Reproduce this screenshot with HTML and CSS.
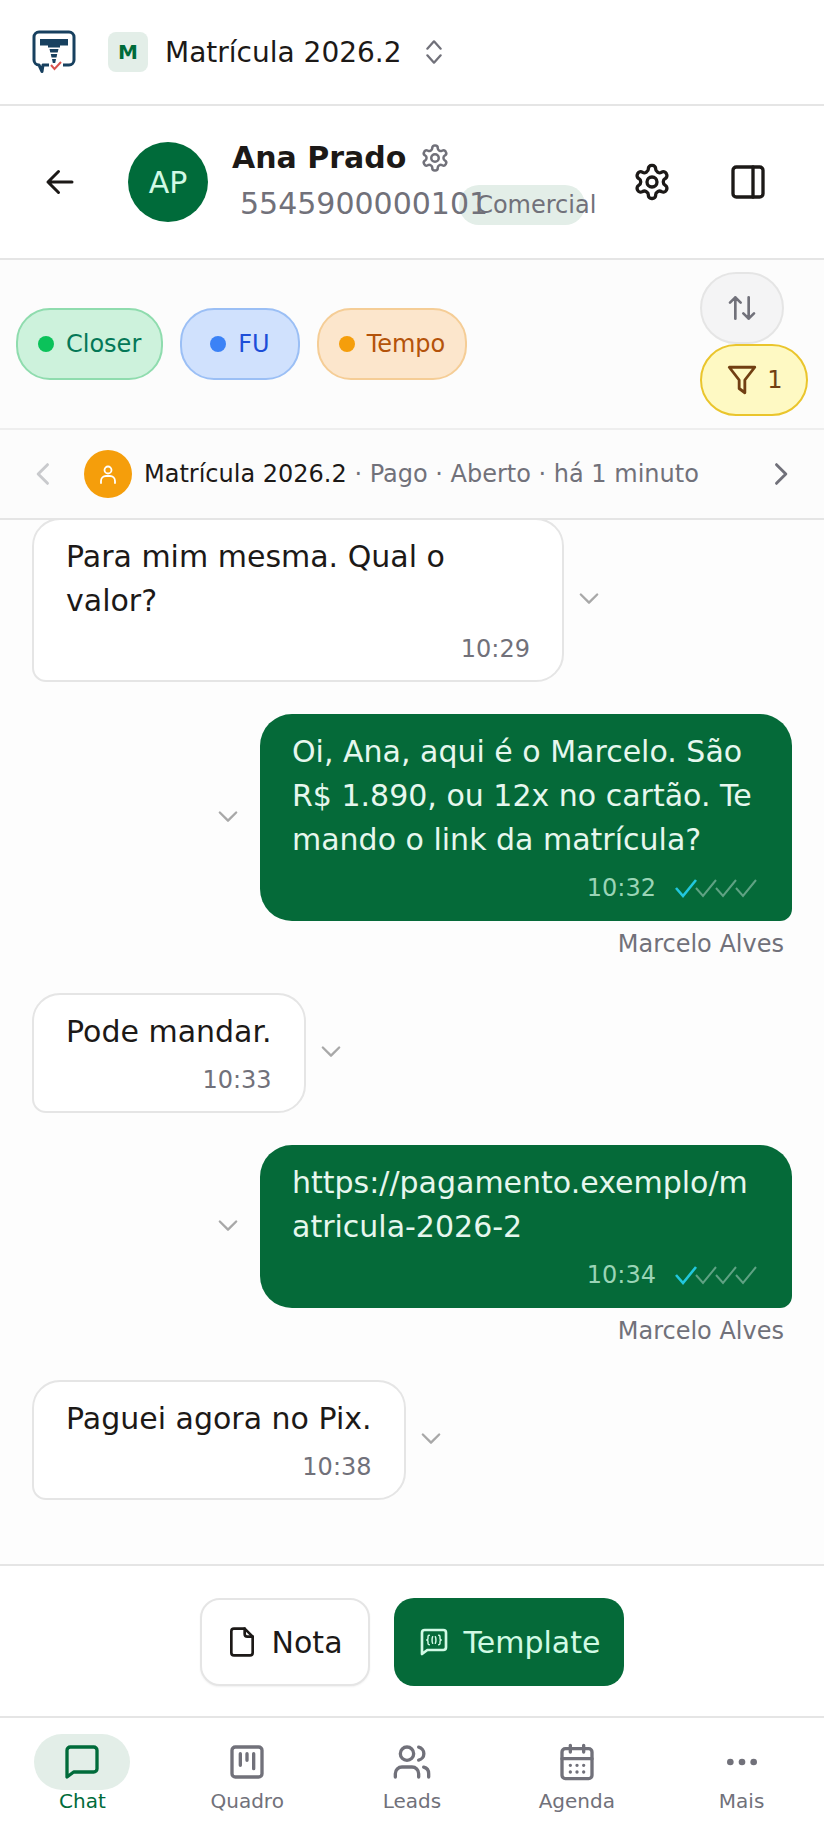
FILE: index.html

```html
<!DOCTYPE html>
<html lang="pt-BR">
<head>
  <meta charset="UTF-8">
  <meta name="viewport" content="width=device-width, initial-scale=1.0">
  <title>Chat</title>
  <link rel="stylesheet" href="styles.css">
</head>
<body>
  <div class="app">
    <div class="topbar">
      <svg class="logo" viewBox="0 0 44 44" fill="none">
        <path d="M17 35H11l-1 6.500-3-6.500a5 5 0 0 1-5-5V7a5 5 0 0 1 5-5h30a5 5 0 0 1 5 5v23a5 5 0 0 1-5 5h-6" stroke="#17405f" stroke-width="3" stroke-linejoin="round"/>
        <path d="M8 9h28v6.500H28v2H16v-2H8zM17.500 19h9l-.8 3.500h-7.400zM18.800 24h6.400l-.7 3.500h-5zM20 29h4l-.8 4h-2.400z" fill="#17405f"/>
        <path d="M19 35l3.500 4 6.500-7" stroke="#d9534f" stroke-width="2"/>
      </svg>
      <div class="workspace-badge">M</div>
      <span class="workspace-name">Matrícula 2026.2</span>
      <svg class="updown" viewBox="0 0 24 24" fill="none" stroke="#71717a" stroke-width="1.700" stroke-linecap="round" stroke-linejoin="round"><path d="M7 9.500 12 4l5 5.500M7 14.500 12 20l5-5.500"/></svg>
    </div>

    <div class="contact">
      <svg class="icon back" viewBox="0 0 24 24" fill="none" stroke="#1c1917" stroke-width="2" stroke-linecap="round" stroke-linejoin="round"><path d="M20 12H4M11 5l-7 7 7 7"/></svg>
      <div class="avatar">AP</div>
      <div class="contact-info">
        <div class="contact-name">Ana Prado
          <svg class="gear-small" viewBox="0 0 24 24" fill="none" stroke="#71717a" stroke-width="2" stroke-linecap="round" stroke-linejoin="round"><path d="M12.200 2h-.4a2 2 0 0 0-2 2v.2a2 2 0 0 1-1 1.700l-.4.3a2 2 0 0 1-2 0l-.2-.1a2 2 0 0 0-2.700.7l-.2.4a2 2 0 0 0 .7 2.700l.2.100a2 2 0 0 1 1 1.700v.5a2 2 0 0 1-1 1.700l-.2.100a2 2 0 0 0-.7 2.700l.2.400a2 2 0 0 0 2.700.700l.2-.100a2 2 0 0 1 2 0l.4.300a2 2 0 0 1 1 1.700v.2a2 2 0 0 0 2 2h.4a2 2 0 0 0 2-2v-.2a2 2 0 0 1 1-1.700l.4-.300a2 2 0 0 1 2 0l.2.100a2 2 0 0 0 2.700-.700l.2-.400a2 2 0 0 0-.7-2.700l-.2-.100a2 2 0 0 1-1-1.700v-.5a2 2 0 0 1 1-1.700l.2-.100a2 2 0 0 0 .7-2.700l-.2-.400a2 2 0 0 0-2.700-.700l-.2.100a2 2 0 0 1-2 0l-.4-.300a2 2 0 0 1-1-1.700V4a2 2 0 0 0-2-2z"/><circle cx="12" cy="12" r="3"/></svg>
        </div>
        <div class="contact-sub">
          <span class="phone">5545900000101</span>
          <span class="dept">Comercial</span>
        </div>
      </div>
      <svg class="icon gear" viewBox="0 0 24 24" fill="none" stroke="#1c1917" stroke-width="2" stroke-linecap="round" stroke-linejoin="round"><path d="M12.200 2h-.4a2 2 0 0 0-2 2v.2a2 2 0 0 1-1 1.700l-.4.3a2 2 0 0 1-2 0l-.2-.1a2 2 0 0 0-2.700.7l-.2.4a2 2 0 0 0 .7 2.700l.2.100a2 2 0 0 1 1 1.700v.5a2 2 0 0 1-1 1.700l-.2.100a2 2 0 0 0-.7 2.700l.2.400a2 2 0 0 0 2.700.700l.2-.100a2 2 0 0 1 2 0l.4.300a2 2 0 0 1 1 1.700v.2a2 2 0 0 0 2 2h.4a2 2 0 0 0 2-2v-.2a2 2 0 0 1 1-1.700l.4-.300a2 2 0 0 1 2 0l.2.100a2 2 0 0 0 2.700-.700l.2-.400a2 2 0 0 0-.7-2.700l-.2-.100a2 2 0 0 1-1-1.700v-.5a2 2 0 0 1 1-1.700l.2-.100a2 2 0 0 0 .7-2.700l-.2-.400a2 2 0 0 0-2.700-.700l-.2.100a2 2 0 0 1-2 0l-.4-.300a2 2 0 0 1-1-1.700V4a2 2 0 0 0-2-2z"/><circle cx="12" cy="12" r="3"/></svg>
      <svg class="icon panel" viewBox="0 0 24 24" fill="none" stroke="#1c1917" stroke-width="2" stroke-linecap="round" stroke-linejoin="round"><rect x="3" y="3" width="18" height="18" rx="2"/><path d="M15 3v18"/></svg>
    </div>

    <div class="tagsbar">
      <div class="tags">
        <div class="tag tag-green"><span class="dot"></span>Closer</div>
        <div class="tag tag-blue"><span class="dot"></span>FU</div>
        <div class="tag tag-orange"><span class="dot"></span>Tempo</div>
      </div>
      <div class="tag-actions">
        <div class="sort-btn">
          <svg viewBox="0 0 24 24" fill="none" stroke="#71717a" stroke-width="2" stroke-linecap="round" stroke-linejoin="round"><path d="M11 8 7 4 3 8M7 4v16M21 16l-4 4-4-4M17 20V4"/></svg>
        </div>
        <div class="filter-btn">
          <svg viewBox="0 0 24 24" fill="none" stroke="#713f12" stroke-width="2" stroke-linecap="round" stroke-linejoin="round"><path d="M3 3h18l-7 9v9l-4-3v-6z"/></svg>
          <span>1</span>
        </div>
      </div>
    </div>

    <div class="eventbar">
      <svg class="chev" viewBox="0 0 24 24" fill="none" stroke="#c9cacd" stroke-width="2.500" stroke-linecap="round" stroke-linejoin="round"><path d="m15 4-8 8 8 8"/></svg>
      <div class="event-avatar">
        <svg viewBox="0 0 24 24" fill="none" stroke="#fff" stroke-width="1.800" stroke-linecap="round"><circle cx="12" cy="8" r="3.500"/><path d="M5 21v-2a5 5 0 0 1 5-5h4a5 5 0 0 1 5 5v2"/></svg>
      </div>
      <div class="event-text"><b>Matrícula 2026.2</b> · Pago · Aberto · há 1 minuto</div>
      <svg class="chev" viewBox="0 0 24 24" fill="none" stroke="#71717a" stroke-width="2.500" stroke-linecap="round" stroke-linejoin="round"><path d="m9 4 8 8-8 8"/></svg>
    </div>

    <div class="messages">
      <div class="row">
        <div class="bubble in">
          <p>Para mim mesma. Qual o valor?</p>
          <div class="meta"><span class="time">10:29</span></div>
        </div>
        <svg class="caret" viewBox="0 0 24 24" fill="none" stroke="#a8a8a8" stroke-width="2" stroke-linecap="round" stroke-linejoin="round"><path d="m5 9 7 7 7-7"/></svg>
      </div>

      <div class="row out">
        <svg class="caret" viewBox="0 0 24 24" fill="none" stroke="#a8a8a8" stroke-width="2" stroke-linecap="round" stroke-linejoin="round"><path d="m5 9 7 7 7-7"/></svg>
        <div class="bubble out-bubble">
          <p>Oi, Ana, aqui é o Marcelo. São R$ 1.890, ou 12x no cartão. Te mando o link da matrícula?</p>
          <div class="meta"><span class="time">10:32</span>
            <svg class="ticks" viewBox="0 0 84 24" fill="none" stroke-width="2"><path d="M3 12l7 8L23 4" stroke="#22c7dd" stroke-width="2.600"/><path d="M23 12l7 8L43 4M43 12l7 8L63 4M63 12l7 8L83 4" stroke="#5fa283"/></svg>
          </div>
        </div>
      </div>
      <div class="sender">Marcelo Alves</div>

      <div class="row">
        <div class="bubble in">
          <p>Pode mandar.</p>
          <div class="meta"><span class="time">10:33</span></div>
        </div>
        <svg class="caret" viewBox="0 0 24 24" fill="none" stroke="#a8a8a8" stroke-width="2" stroke-linecap="round" stroke-linejoin="round"><path d="m5 9 7 7 7-7"/></svg>
      </div>

      <div class="row out">
        <svg class="caret" viewBox="0 0 24 24" fill="none" stroke="#a8a8a8" stroke-width="2" stroke-linecap="round" stroke-linejoin="round"><path d="m5 9 7 7 7-7"/></svg>
        <div class="bubble out-bubble">
          <p>https://pagamento.exemplo/matricula-2026-2</p>
          <div class="meta"><span class="time">10:34</span>
            <svg class="ticks" viewBox="0 0 84 24" fill="none" stroke-width="2"><path d="M3 12l7 8L23 4" stroke="#22c7dd" stroke-width="2.600"/><path d="M23 12l7 8L43 4M43 12l7 8L63 4M63 12l7 8L83 4" stroke="#5fa283"/></svg>
          </div>
        </div>
      </div>
      <div class="sender">Marcelo Alves</div>

      <div class="row">
        <div class="bubble in">
          <p>Paguei agora no Pix.</p>
          <div class="meta"><span class="time">10:38</span></div>
        </div>
        <svg class="caret" viewBox="0 0 24 24" fill="none" stroke="#a8a8a8" stroke-width="2" stroke-linecap="round" stroke-linejoin="round"><path d="m5 9 7 7 7-7"/></svg>
      </div>
    </div>

    <div class="composer">
      <button class="btn btn-note">
        <svg viewBox="0 0 24 24" fill="none" stroke="#1c1917" stroke-width="2" stroke-linecap="round" stroke-linejoin="round"><path d="M14 2H6a2 2 0 0 0-2 2v16a2 2 0 0 0 2 2h12a2 2 0 0 0 2-2V8z"/><path d="M14 2v4a2 2 0 0 0 2 2h4"/></svg>
        Nota
      </button>
      <button class="btn btn-template">
        <svg viewBox="0 0 24 24" fill="none" stroke="#d1fae5" stroke-width="2" stroke-linecap="round" stroke-linejoin="round"><path d="M3 21V5a2 2 0 0 1 2-2h14a2 2 0 0 1 2 2v11a2 2 0 0 1-2 2H7z"/><path d="M8.500 7c-1.200 0-1 1-1 2s-.3 1.500-1 1.500c.7 0 1 .5 1 1.500s-.2 2 1 2M15.500 7c1.200 0 1 1 1 2s.3 1.500 1 1.500c-.7 0-1 .5-1 1.500s.2 2-1 2M11 8c-.6 1-.6 4 0 5M13 8c.6 1 .6 4 0 5" stroke-width="1.100"/></svg>
        Template
      </button>
    </div>

    <nav class="bottomnav">
      <div class="nav-item active">
        <div class="nav-icon"><svg viewBox="0 0 24 24" fill="none" stroke="#006b3a" stroke-width="2" stroke-linecap="round" stroke-linejoin="round"><path d="M3 21V5a2 2 0 0 1 2-2h14a2 2 0 0 1 2 2v11a2 2 0 0 1-2 2H7z"/></svg></div>
        <span>Chat</span>
      </div>
      <div class="nav-item">
        <div class="nav-icon"><svg viewBox="0 0 24 24" fill="none" stroke="#71717a" stroke-width="2" stroke-linecap="round" stroke-linejoin="round"><rect x="3" y="3" width="18" height="18" rx="2"/><path d="M8 7v7M12 7v4M16 7v9"/></svg></div>
        <span>Quadro</span>
      </div>
      <div class="nav-item">
        <div class="nav-icon"><svg viewBox="0 0 24 24" fill="none" stroke="#71717a" stroke-width="2" stroke-linecap="round" stroke-linejoin="round"><path d="M16 21v-2a4 4 0 0 0-4-4H6a4 4 0 0 0-4 4v2"/><circle cx="9" cy="7" r="4"/><path d="M22 21v-2a4 4 0 0 0-3-3.900M16 3.100a4 4 0 0 1 0 7.800"/></svg></div>
        <span>Leads</span>
      </div>
      <div class="nav-item">
        <div class="nav-icon"><svg viewBox="0 0 24 24" fill="none" stroke="#71717a" stroke-width="2" stroke-linecap="round" stroke-linejoin="round"><rect x="3" y="4" width="18" height="18" rx="2"/><path d="M8 2v4M16 2v4M3 10h18M8 14h.01M12 14h.01M16 14h.01M8 18h.01M12 18h.01M16 18h.01"/></svg></div>
        <span>Agenda</span>
      </div>
      <div class="nav-item">
        <div class="nav-icon"><svg viewBox="0 0 24 24" fill="#71717a"><circle cx="5" cy="12" r="2"/><circle cx="12" cy="12" r="2"/><circle cx="19" cy="12" r="2"/></svg></div>
        <span>Mais</span>
      </div>
    </nav>
  </div>
</body>
</html>
```

FILE: styles.css

```css
* {
  box-sizing: border-box;
}
body {
  margin: 0;
  font-family: 'DejaVu Sans', sans-serif;
  color: #1c1917;
  background-color: #ffffff;
}
p {
  margin: 0;
}
.app {
  width: 824px;
  height: 1830px;
  display: flex;
  flex-direction: column;
  overflow: hidden;
}

/* top bar */
.topbar {
  height: 106px;
  flex: none;
  display: flex;
  align-items: center;
  padding-left: 32px;
  border-bottom: 2px solid #e5e5e5;
}
.logo {
  width: 44px;
  height: 44px;
  margin-right: 32px;
}
.workspace-badge {
  width: 40px;
  height: 40px;
  border-radius: 8px;
  background-color: #e3eee8;
  color: #006b3a;
  font-weight: bold;
  font-size: 20px;
  display: flex;
  align-items: center;
  justify-content: center;
  margin-right: 17px;
}
.workspace-name {
  font-size: 28px;
}
.updown {
  width: 32px;
  height: 32px;
  margin-left: 16px;
}

/* contact header */
.contact {
  height: 154px;
  flex: none;
  display: flex;
  align-items: center;
  padding-left: 42px;
  border-bottom: 2px solid #e5e5e5;
}
.icon {
  width: 40px;
  height: 40px;
  flex: none;
}
.back {
  width: 36px;
  height: 36px;
}
.avatar {
  width: 80px;
  height: 80px;
  border-radius: 50%;
  background-color: #006b3a;
  color: #d1fae5;
  font-size: 30px;
  display: flex;
  align-items: center;
  justify-content: center;
  margin-left: 50px;
  flex: none;
}
.contact-info {
  width: 400px;
  margin-left: 24px;
  padding-bottom: 1px;
}
.contact-name {
  font-size: 30px;
  font-weight: bold;
  display: flex;
  align-items: center;
  gap: 14px;
  height: 38px;
  white-space: nowrap;
}
.gear-small {
  width: 30px;
  height: 30px;
}
.contact-sub {
  display: flex;
  align-items: center;
  margin-top: 6px;
  margin-left: 8px;
}
/* the number runs over the pill next to it */
.phone {
  position: relative;
  z-index: 1;
  font-size: 30px;
  color: #71717a;
  white-space: nowrap;
}
.dept {
  margin-left: -29px;
  margin-top: 2px;
  flex: none;
  height: 40px;
  padding-left: 17px;
  width: 126px;
  border-radius: 20px;
  background-color: #e3eee8;
  color: #71717a;
  font-size: 24px;
  line-height: 40px;
  white-space: nowrap;
}
.panel {
  margin-left: 56px;
}

/* tags */
.tagsbar {
  height: 170px;
  flex: none;
  display: flex;
  align-items: center;
  justify-content: space-between;
  padding: 0 16px;
  background-color: #fcfcfc;
  border-bottom: 2px solid #eeeeee;
}
.tags {
  display: flex;
  gap: 17px;
}
.tag {
  height: 72px;
  border-radius: 34px;
  border: 2px solid;
  display: flex;
  align-items: center;
  padding: 0 20px;
  font-size: 24px;
  gap: 12px;
}
.dot {
  width: 16px;
  height: 16px;
  border-radius: 50%;
}
.tag-green {
  background-color: #cdf2dc;
  border-color: #8fdcae;
  color: #047857;
}
.tag-green .dot {
  background-color: #0bc25a;
}
.tag-blue {
  background-color: #d0e1fd;
  border-color: #9bbff5;
  color: #1d4ed8;
  padding: 0 28px;
}
.tag-blue .dot {
  background-color: #3b82f6;
}
.tag-orange {
  background-color: #fce6cc;
  border-color: #f5cd96;
  color: #b4530a;
}
.tag-orange .dot {
  background-color: #f59e0b;
}
.tag-actions {
  display: flex;
  flex-direction: column;
  align-items: flex-start;
}
.sort-btn {
  width: 84px;
  height: 72px;
  border-radius: 36px;
  background-color: #f4f4f5;
  border: 2px solid #e5e5e5;
  display: flex;
  align-items: center;
  justify-content: center;
}
.sort-btn svg {
  width: 32px;
  height: 32px;
}
.filter-btn {
  width: 108px;
  height: 72px;
  border-radius: 36px;
  background-color: #fef9c3;
  border: 2px solid #eac52c;
  color: #713f12;
  display: flex;
  align-items: center;
  justify-content: center;
  gap: 8px;
  font-size: 24px;
}
.filter-btn svg {
  width: 34px;
  height: 34px;
}

/* event bar */
.eventbar {
  height: 90px;
  flex: none;
  display: flex;
  align-items: center;
  padding: 0 30px;
  background-color: #fcfcfc;
  border-bottom: 2px solid #e5e5e5;
}
.chev {
  width: 28px;
  height: 28px;
  flex: none;
}
.event-avatar {
  width: 48px;
  height: 48px;
  border-radius: 50%;
  background-color: #f59e0b;
  display: flex;
  align-items: center;
  justify-content: center;
  margin-left: 26px;
  flex: none;
}
.event-avatar svg {
  width: 24px;
  height: 24px;
}
.event-text {
  font-size: 24px;
  color: #71717a;
  margin-left: 12px;
  flex: 1;
  white-space: nowrap;
}
.event-text b {
  font-weight: normal;
  color: #1c1917;
}

/* messages */
.messages {
  flex: 1;
  min-height: 0;
  overflow: hidden;
  display: flex;
  flex-direction: column;
  justify-content: flex-end;
  background-color: #fdfdfd;
  padding: 0 32px 64px 32px;
}
.row {
  display: flex;
  align-items: center;
  gap: 11px;
  flex: none;
  margin-top: 32px;
}
.row.out {
  justify-content: flex-end;
  gap: 18px;
}
.bubble {
  font-size: 30px;
  line-height: 44px;
  flex: none;
}
.bubble.in {
  max-width: 532px;
  padding: 15px 32px 13px;
  background-color: #ffffff;
  border: 2px solid #e5e5e5;
  border-radius: 28px 28px 28px 14px;
}
.out-bubble {
  width: 532px;
  padding: 16px 32px 15px;
  background-color: #056a39;
  color: #e6f7ee;
  border-radius: 32px 32px 12px 32px;
  overflow-wrap: anywhere;
}
.meta {
  display: flex;
  justify-content: flex-end;
  align-items: center;
  margin-top: 8px;
  line-height: 36px;
}
.time {
  font-size: 24px;
  color: #71717a;
}
.out-bubble .time {
  color: #9ad4b6;
}
.ticks {
  width: 84px;
  height: 24px;
  margin-left: 17px;
  margin-right: 3px;
}
.caret {
  width: 28px;
  height: 28px;
  flex: none;
  margin-bottom: 4px;
}
.sender {
  flex: none;
  text-align: right;
  font-size: 24px;
  color: #71717a;
  margin-top: 6px;
  padding-right: 8px;
  line-height: 34px;
}

/* composer */
.composer {
  height: 154px;
  flex: none;
  display: flex;
  align-items: center;
  justify-content: center;
  gap: 24px;
  padding-top: 2px;
  border-top: 2px solid #e5e5e5;
  border-bottom: 2px solid #e5e5e5;
  background-color: #ffffff;
}
.btn {
  height: 88px;
  border-radius: 20px;
  font-family: inherit;
  font-size: 30px;
  display: flex;
  align-items: center;
  gap: 14px;
  padding: 0 24px;
}
.btn svg {
  width: 32px;
  height: 32px;
}
.btn-note {
  background-color: #ffffff;
  color: #1c1917;
  border: 2px solid #e5e5e5;
  box-shadow: 0 1px 2px rgba(0, 0, 0, 0.06);
  padding-right: 25px;
}
.btn-template {
  background-color: #056a39;
  color: #d1fae5;
  border: none;
}

/* bottom nav */
.bottomnav {
  height: 112px;
  flex: none;
  display: flex;
  background-color: #ffffff;
}
.nav-item {
  flex: 1;
  display: flex;
  flex-direction: column;
  align-items: center;
  color: #71717a;
  font-size: 20px;
  padding-top: 16px;
}
.nav-icon {
  width: 96px;
  height: 56px;
  border-radius: 28px;
  display: flex;
  align-items: center;
  justify-content: center;
}
.nav-icon svg {
  width: 40px;
  height: 40px;
}
.nav-item span {
  margin-top: -1px;
}
.nav-item.active .nav-icon {
  background-color: #e3eee8;
}
.nav-item.active {
  color: #006b3a;
}
```
